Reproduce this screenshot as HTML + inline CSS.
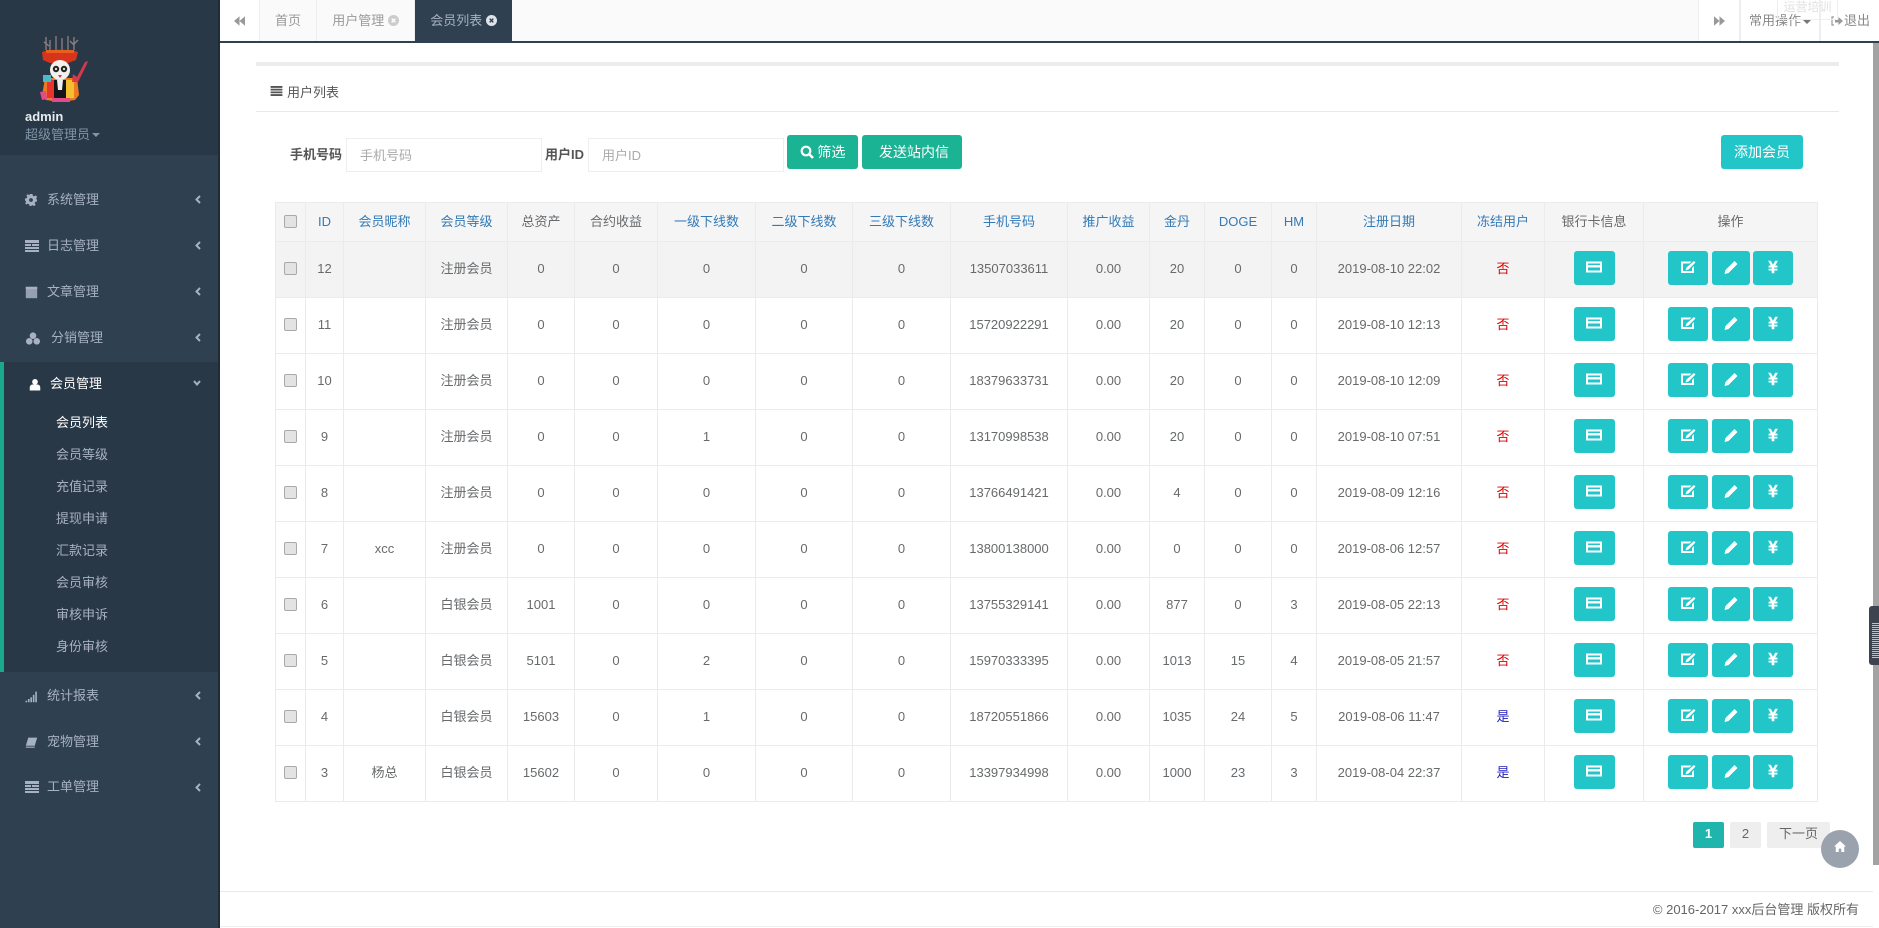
<!DOCTYPE html>
<html lang="zh"><head><meta charset="utf-8"><title>会员列表</title>
<style>
*{box-sizing:border-box}
html,body{margin:0;padding:0;width:1879px;height:928px;overflow:hidden;background:#fff;font:13px/1.4 "Liberation Sans","Noto Sans CJK SC",sans-serif;color:#676a6c}
.abs,.m,.s,.t,.c{position:absolute}
#side{position:absolute;left:0;top:0;width:220px;height:928px;background:#2f4050;border-right:2px solid #1f2c39}
#phead{position:absolute;left:0;top:0;width:218px;height:155px;background:#283846}
#act{position:absolute;left:0;top:362px;width:218px;height:310px;background:#293846;border-left:4px solid #19aa8d}
.m{left:47px;color:#a7b1c2;line-height:18px;height:18px;white-space:nowrap}
.m svg{position:absolute;left:-22px;top:3px;width:13px;height:13px;fill:#a7b1c2}
.c{left:195px;width:6px;height:9px}
.c svg{display:block;width:6px;height:9px;fill:none;stroke:#a7b1c2;stroke-width:2}
.s{left:56px;color:#a7b1c2;line-height:18px;white-space:nowrap}
#tabs{position:absolute;left:220px;top:0;width:1659px;height:43px;background:#fafafa;border-bottom:2px solid #2f4050}
.tb{position:absolute;top:0;height:41px;line-height:41px;color:#999;text-align:center;background:#fafafa;border-right:1px solid #eee}
.wh{background:#fff;border-left:1px solid #eee}
#tbl{position:absolute;left:275px;top:202px;width:1542px;border-collapse:collapse;table-layout:fixed;text-align:center;color:#676a6c}
#tbl th,#tbl td{border:1px solid #ebebeb;padding:0;font-weight:400;overflow:hidden;white-space:nowrap}
#tbl th{height:39px;background:#f5f5f6;color:#337ab7}
#tbl th.g{color:#676a6c}
#tbl td{height:56px}
#tbl tr.h td{background:#f3f3f4}
.cb{display:block;width:13px;height:13px;margin:0 auto;background:#e3e3e3;border:1px solid #a9a9a9;border-radius:2px;position:relative;top:-1px}
.b{display:inline-block;height:34px;background:#23c6c8;border-radius:3px;vertical-align:middle;position:relative;margin:0 0 0 4px;top:-2px}
.b svg{position:absolute;left:50%;top:50%;width:16px;height:16px;margin:-9px 0 0 -8px;fill:#fff}
.w1{width:41px;margin:0}.w2{width:40px;margin:0}.w3{width:38px}.w4{width:40px;margin-left:3px}
.no{color:#d00}.yes{color:#22b;font-weight:700}
.inp{position:absolute;top:138px;height:34px;border:1px solid #eee;color:#aaa;line-height:34px;padding-left:13px;background:#fff}
.lbl{position:absolute;top:146px;line-height:18px;font-weight:700;color:#555}
.btn{position:absolute;top:135px;height:34px;border-radius:3px;background:#1ab394;color:#fff;font-size:14px;line-height:35px;text-align:center}
.pg{position:absolute;top:822px;height:26px;line-height:24px;text-align:center;background:#eee;color:#666;border-radius:2px}
</style></head><body>
<svg width="0" height="0" style="position:absolute">
<defs>
<symbol id="card" viewBox="0 0 16 16"><path fill-rule="evenodd" d="M0 2.500h16v11H0zM2 4.500v1.500h12V4.500zM2 8.500v3h12v-3z"/></symbol>
<symbol id="edit" viewBox="0 0 16 16"><path fill-rule="evenodd" d="M1 2.500h10.500L9.500 4.500H3v7.500h9V9l2-2v7H1z"/><path d="M14 2l1.500 1.500-7 7L5.500 11.500l1-3z"/></symbol>
<symbol id="pen" viewBox="0 0 16 16"><path d="M11.500 2l3 3-9 9L1.500 15l1-4z"/></symbol>
<symbol id="yen" viewBox="-1 0 18 16"><path d="M2.500 1h3L8 5.500 10.500 1h3L10.500 6.500H13V8.500H9.500V10H13v2H9.500v3h-3v-3H3v-2h3.500V8.500H3V6.500h2.500z"/></symbol>
<symbol id="chev" viewBox="0 0 6 9"><path d="M5 1L1.500 4.500 5 8"/></symbol>
</defs></svg>

<div id="side">
<div id="phead"></div>
<div id="act"></div>
<svg class="abs" style="left:40px;top:35px;width:50px;height:68px" viewBox="40 35 50 68">
<path d="M46 37v13M50 40v10M44 42l5 4M56 36v14M62 38v12M68 36v14M74 37v13M78 40l-5 5M70 41l4 4" stroke="#8f8088" stroke-width="1.300" fill="none"/>
<path d="M42 52c8-3 28-3 36 0l-2 8-8 3H50l-7-3z" fill="#d8341c"/>
<path d="M46 50h28v3H46z" fill="#e8601e"/>
<path d="M45 78l-3 18 4 4 14 2 15-2 4-5-2-17z" fill="#ee7a22"/>
<rect x="47" y="80" width="7" height="18" fill="#e8342a"/><rect x="66" y="80" width="8" height="18" fill="#f5c030"/>
<rect x="54" y="80" width="12" height="18" fill="#15151a"/><path d="M57 80h6l-1 10h-4z" fill="#eee"/>
<path d="M43 75h8v7h-8z" fill="#4db8c8"/><path d="M40 92l6-1 1 8-5 1z" fill="#e24a8a"/>
<path d="M72 82l1-8 4 3 8-15 3-1-2 5-8 16z" fill="#d8384a"/>
<circle cx="60" cy="70" r="10" fill="#f4f0ec"/><circle cx="56" cy="69" r="3.200" fill="#222"/><circle cx="64" cy="69" r="3.200" fill="#222"/><circle cx="56" cy="69" r="1.200" fill="#ddd"/><circle cx="64" cy="69" r="1.200" fill="#ddd"/><path d="M58 75h4l-2 3z" fill="#d8384a"/>
<rect x="52" y="98" width="18" height="4" fill="#e24a8a"/>
</svg>
<div class="abs" style="left:25px;top:108px;color:#e6edf1;font-weight:700;line-height:18px">admin</div>
<div class="abs" style="left:25px;top:126px;color:#8095a8;line-height:18px">超级管理员<span style="display:inline-block;border:4px solid transparent;border-top-color:#8095a8;border-bottom:0;margin-left:2px;vertical-align:2px"></span></div>

<div class="m" style="top:191px"><svg style="width:12px;height:12px;top:3px" viewBox="0 0 16 16"><path fill-rule="evenodd" d="M6 0h4l.5 2.400 1.700.7 2-1.300 2 2-1.300 2 .7 1.700L16 8v2l-2.400.5-.7 1.700 1.300 2-2 2-2-1.300-1.700.7L8 16H6l-.5-2.400-1.700-.7-2 1.300-1.500-2 1.300-2-.7-1.700L0 10V6l2.400-.5.7-1.700-1.300-2 2-1.500 2 1.300L6.500 1zM8 5.500a2.500 2.500 0 100 5 2.500 2.500 0 000-5z"/></svg>系统管理</div>
<div class="m" style="top:237px"><svg style="width:14px;height:12px" viewBox="0 0 14 12"><path d="M0 0h14v3H0zM0 4h6v2H0zM7 4h7v2H7zM0 7h14v2H0zM0 10h14v2H0z"/></svg>日志管理</div>
<div class="m" style="top:283px"><svg style="width:13px;height:13px" viewBox="0 0 16 16"><path d="M1 1h14v14H1z" opacity=".85"/><path d="M1 1h14v3H1z"/></svg>文章管理</div>
<div class="m" style="top:329px;left:51px"><svg style="left:-26px;width:16px;height:15px;top:2px" viewBox="0 0 16 16"><circle cx="8" cy="5" r="3.500"/><circle cx="4" cy="11" r="3.500"/><circle cx="12" cy="11" r="3.500"/></svg>分销管理</div>
<div class="m" style="top:375px;left:50px;color:#fff"><svg style="left:-21px;fill:#fff;width:12px;height:13px" viewBox="0 0 16 16"><circle cx="8" cy="4.500" r="3.800"/><path d="M1 16v-4c0-2.500 2-4 3.500-4h7c1.500 0 3.500 1.500 3.500 4v4z"/></svg>会员管理</div>
<div class="m" style="top:687px"><svg style="width:14px;height:13px" viewBox="0 0 16 16"><path d="M0 13h2v2H0zM3 11h2v4H3zM6 9h2v6H6zM9 6h2v9H9zM12 2h2v13h-2z"/></svg>统计报表</div>
<div class="m" style="top:733px"><svg viewBox="0 0 16 16"><path d="M4 2h11l-3 10H1zM1 13h11v1.500H1z"/></svg>宠物管理</div>
<div class="m" style="top:778px"><svg style="width:14px;height:12px" viewBox="0 0 14 12"><path d="M0 0h14v3H0zM0 4h6v2H0zM7 4h7v2H7zM0 7h14v2H0zM0 10h14v2H0z"/></svg>工单管理</div>

<div class="c" style="top:195px"><svg><use href="#chev"/></svg></div>
<div class="c" style="top:241px"><svg><use href="#chev"/></svg></div>
<div class="c" style="top:287px"><svg><use href="#chev"/></svg></div>
<div class="c" style="top:333px"><svg><use href="#chev"/></svg></div>
<div class="c" style="top:380px;left:193px;width:8px"><svg style="width:8px;height:6px" viewBox="0 0 8 6"><path d="M1 1l3 3.500L7 1"/></svg></div>
<div class="c" style="top:691px"><svg><use href="#chev"/></svg></div>
<div class="c" style="top:737px"><svg><use href="#chev"/></svg></div>
<div class="c" style="top:783px"><svg><use href="#chev"/></svg></div>

<div class="s" style="top:414px;color:#fff">会员列表</div>
<div class="s" style="top:446px">会员等级</div>
<div class="s" style="top:478px">充值记录</div>
<div class="s" style="top:510px">提现申请</div>
<div class="s" style="top:542px">汇款记录</div>
<div class="s" style="top:574px">会员审核</div>
<div class="s" style="top:606px">审核申诉</div>
<div class="s" style="top:638px">身份审核</div>
</div>

<div id="tabs">
<div class="tb" style="left:0;width:40px;background:#fff"><svg style="width:11px;height:10px;fill:#999;vertical-align:-1px" viewBox="0 0 14 12"><path d="M7 0v12L0 6zM14 0v12L7 6z"/></svg></div>
<div class="tb" style="left:40px;width:57px">首页</div>
<div class="tb" style="left:97px;width:98px">用户管理 <svg style="width:11px;height:11px;vertical-align:-1px" viewBox="0 0 12 12"><circle cx="6" cy="6" r="6" fill="#ccc"/><path d="M4 4l4 4M8 4l-4 4" stroke="#fff" stroke-width="1.500"/></svg></div>
<div class="tb" style="left:195px;width:97px;background:#2f4050;color:#a7b1c2;border:0">会员列表 <svg style="width:11px;height:11px;vertical-align:-1px" viewBox="0 0 12 12"><circle cx="6" cy="6" r="6" fill="#dfe4ea"/><path d="M4 4l4 4M8 4l-4 4" stroke="#2f4050" stroke-width="1.500"/></svg></div>
<div class="tb wh" style="left:1478px;width:42px"><svg style="width:11px;height:10px;fill:#999;vertical-align:-1px" viewBox="0 0 14 12"><path d="M0 0v12L7 6zM7 0v12L14 6z"/></svg></div>
<div class="tb wh" style="left:1520px;width:80px;color:#888">常用操作<span style="display:inline-block;border:4px solid transparent;border-top-color:#777;border-bottom:0;margin-left:2px;vertical-align:1px"></span></div>
<div class="tb" style="left:1600px;width:59px;background:#fff;border:0;border-left:1px solid #eee;color:#888;text-align:left;padding-left:10px"><svg style="width:12px;height:10px;vertical-align:-1px;margin-right:1px" viewBox="0 0 12 10"><path d="M3 1H1v8h2" fill="none" stroke="#999" stroke-width="1.200"/><path d="M4 3.500h3.500V1L12 5 7.500 9V6.500H4z" fill="#999"/></svg>退出</div>
</div>
<div class="abs" style="left:1777px;top:0;width:61px;height:20px;border:1px solid #eee;border-top:0;color:#e0e0e0;font-size:12px;line-height:14px;text-align:center">运营培训</div>

<div class="abs" style="left:256px;top:62px;width:1583px;height:4px;background:#ececec"></div>
<svg class="abs" style="left:270px;top:86px;width:13px;height:10px;fill:#555" viewBox="0 0 13 11"><path d="M0 0h13v2H0zM0 3h13v2H0zM0 6h13v2H0zM0 9h13v2H0z"/></svg>
<div class="abs" style="left:287px;top:84px;line-height:18px;color:#555">用户列表</div>
<div class="abs" style="left:256px;top:111px;width:1583px;height:1px;background:#e7eaec"></div>

<div class="lbl" style="left:290px">手机号码</div>
<div class="inp" style="left:346px;width:196px">手机号码</div>
<div class="lbl" style="left:545px">用户ID</div>
<div class="inp" style="left:588px;width:196px">用户ID</div>
<div class="btn" style="left:787px;width:71px"><svg style="width:14px;height:14px;vertical-align:-2px" viewBox="0 0 14 14"><circle cx="6" cy="6" r="4.300" fill="none" stroke="#fff" stroke-width="2.200"/><path d="M9 9l4 4" stroke="#fff" stroke-width="2.600"/></svg> 筛选</div>
<div class="btn" style="left:862px;width:100px;padding-left:4px">发送站内信</div>
<div class="btn" style="left:1721px;width:82px;background:#23c6c8">添加会员</div>

<table id="tbl">
<colgroup><col style="width:30px"><col style="width:38px"><col style="width:82px"><col style="width:82px"><col style="width:67px"><col style="width:83px"><col style="width:98px"><col style="width:97px"><col style="width:98px"><col style="width:117px"><col style="width:82px"><col style="width:55px"><col style="width:67px"><col style="width:45px"><col style="width:145px"><col style="width:83px"><col style="width:99px"><col style="width:174px"></colgroup>
<thead><tr><th><span class="cb"></span></th><th>ID</th><th>会员昵称</th><th>会员等级</th><th class="g">总资产</th><th class="g">合约收益</th><th>一级下线数</th><th>二级下线数</th><th>三级下线数</th><th>手机号码</th><th>推广收益</th><th>金丹</th><th>DOGE</th><th>HM</th><th>注册日期</th><th>冻结用户</th><th class="g">银行卡信息</th><th class="g">操作</th></tr></thead>
<tbody>
<tr class="h"><td><span class="cb"></span></td><td>12</td><td></td><td>注册会员</td><td>0</td><td>0</td><td>0</td><td>0</td><td>0</td><td>13507033611</td><td>0.00</td><td>20</td><td>0</td><td>0</td><td>2019-08-10 22:02</td><td class="no">否</td><td><a class="b w1"><svg><use href="#card"/></svg></a></td><td><a class="b w2"><svg><use href="#edit"/></svg></a><a class="b w3"><svg><use href="#pen"/></svg></a><a class="b w4"><svg><use href="#yen"/></svg></a></td></tr>
<tr><td><span class="cb"></span></td><td>11</td><td></td><td>注册会员</td><td>0</td><td>0</td><td>0</td><td>0</td><td>0</td><td>15720922291</td><td>0.00</td><td>20</td><td>0</td><td>0</td><td>2019-08-10 12:13</td><td class="no">否</td><td><a class="b w1"><svg><use href="#card"/></svg></a></td><td><a class="b w2"><svg><use href="#edit"/></svg></a><a class="b w3"><svg><use href="#pen"/></svg></a><a class="b w4"><svg><use href="#yen"/></svg></a></td></tr>
<tr><td><span class="cb"></span></td><td>10</td><td></td><td>注册会员</td><td>0</td><td>0</td><td>0</td><td>0</td><td>0</td><td>18379633731</td><td>0.00</td><td>20</td><td>0</td><td>0</td><td>2019-08-10 12:09</td><td class="no">否</td><td><a class="b w1"><svg><use href="#card"/></svg></a></td><td><a class="b w2"><svg><use href="#edit"/></svg></a><a class="b w3"><svg><use href="#pen"/></svg></a><a class="b w4"><svg><use href="#yen"/></svg></a></td></tr>
<tr><td><span class="cb"></span></td><td>9</td><td></td><td>注册会员</td><td>0</td><td>0</td><td>1</td><td>0</td><td>0</td><td>13170998538</td><td>0.00</td><td>20</td><td>0</td><td>0</td><td>2019-08-10 07:51</td><td class="no">否</td><td><a class="b w1"><svg><use href="#card"/></svg></a></td><td><a class="b w2"><svg><use href="#edit"/></svg></a><a class="b w3"><svg><use href="#pen"/></svg></a><a class="b w4"><svg><use href="#yen"/></svg></a></td></tr>
<tr><td><span class="cb"></span></td><td>8</td><td></td><td>注册会员</td><td>0</td><td>0</td><td>0</td><td>0</td><td>0</td><td>13766491421</td><td>0.00</td><td>4</td><td>0</td><td>0</td><td>2019-08-09 12:16</td><td class="no">否</td><td><a class="b w1"><svg><use href="#card"/></svg></a></td><td><a class="b w2"><svg><use href="#edit"/></svg></a><a class="b w3"><svg><use href="#pen"/></svg></a><a class="b w4"><svg><use href="#yen"/></svg></a></td></tr>
<tr><td><span class="cb"></span></td><td>7</td><td>xcc</td><td>注册会员</td><td>0</td><td>0</td><td>0</td><td>0</td><td>0</td><td>13800138000</td><td>0.00</td><td>0</td><td>0</td><td>0</td><td>2019-08-06 12:57</td><td class="no">否</td><td><a class="b w1"><svg><use href="#card"/></svg></a></td><td><a class="b w2"><svg><use href="#edit"/></svg></a><a class="b w3"><svg><use href="#pen"/></svg></a><a class="b w4"><svg><use href="#yen"/></svg></a></td></tr>
<tr><td><span class="cb"></span></td><td>6</td><td></td><td>白银会员</td><td>1001</td><td>0</td><td>0</td><td>0</td><td>0</td><td>13755329141</td><td>0.00</td><td>877</td><td>0</td><td>3</td><td>2019-08-05 22:13</td><td class="no">否</td><td><a class="b w1"><svg><use href="#card"/></svg></a></td><td><a class="b w2"><svg><use href="#edit"/></svg></a><a class="b w3"><svg><use href="#pen"/></svg></a><a class="b w4"><svg><use href="#yen"/></svg></a></td></tr>
<tr><td><span class="cb"></span></td><td>5</td><td></td><td>白银会员</td><td>5101</td><td>0</td><td>2</td><td>0</td><td>0</td><td>15970333395</td><td>0.00</td><td>1013</td><td>15</td><td>4</td><td>2019-08-05 21:57</td><td class="no">否</td><td><a class="b w1"><svg><use href="#card"/></svg></a></td><td><a class="b w2"><svg><use href="#edit"/></svg></a><a class="b w3"><svg><use href="#pen"/></svg></a><a class="b w4"><svg><use href="#yen"/></svg></a></td></tr>
<tr><td><span class="cb"></span></td><td>4</td><td></td><td>白银会员</td><td>15603</td><td>0</td><td>1</td><td>0</td><td>0</td><td>18720551866</td><td>0.00</td><td>1035</td><td>24</td><td>5</td><td>2019-08-06 11:47</td><td class="yes">是</td><td><a class="b w1"><svg><use href="#card"/></svg></a></td><td><a class="b w2"><svg><use href="#edit"/></svg></a><a class="b w3"><svg><use href="#pen"/></svg></a><a class="b w4"><svg><use href="#yen"/></svg></a></td></tr>
<tr><td><span class="cb"></span></td><td>3</td><td>杨总</td><td>白银会员</td><td>15602</td><td>0</td><td>0</td><td>0</td><td>0</td><td>13397934998</td><td>0.00</td><td>1000</td><td>23</td><td>3</td><td>2019-08-04 22:37</td><td class="yes">是</td><td><a class="b w1"><svg><use href="#card"/></svg></a></td><td><a class="b w2"><svg><use href="#edit"/></svg></a><a class="b w3"><svg><use href="#pen"/></svg></a><a class="b w4"><svg><use href="#yen"/></svg></a></td></tr>
</tbody></table>

<div class="pg" style="left:1693px;width:31px;background:#1fb5ad;color:#fff;font-weight:700">1</div>
<div class="pg" style="left:1730px;width:31px">2</div>
<div class="pg" style="left:1767px;width:63px">下一页</div>
<div class="abs" style="left:1821px;top:830px;width:38px;height:38px;border-radius:50%;background:#9aa2ae"></div>
<svg class="abs" style="left:1834px;top:841px;width:12px;height:11px;fill:#fff" viewBox="0 0 14 13"><path d="M7 0l7 6.500h-2V13H8.500V9h-3v4H2V6.500H0z"/></svg>

<div class="abs" style="left:220px;top:891px;width:1653px;height:1px;background:#e7eaec"></div>
<div class="abs" style="right:20px;top:901px;line-height:18px;color:#666">© 2016-2017 xxx后台管理 版权所有</div>
<div class="abs" style="left:220px;top:926px;width:1653px;height:1px;background:#eee"></div>

<div class="abs" style="left:1873px;top:43px;width:6px;height:822px;background:#a3a3a3"></div>
<div class="abs" style="left:1869px;top:606px;width:10px;height:59px;background:#3d4450;border-radius:3px 0 0 3px"></div>
<div class="abs" style="left:1872px;top:623px;width:7px;height:36px;background:repeating-linear-gradient(180deg,#d8c860 0 1px,#3d4450 1px 2px)"></div>
</body></html>
